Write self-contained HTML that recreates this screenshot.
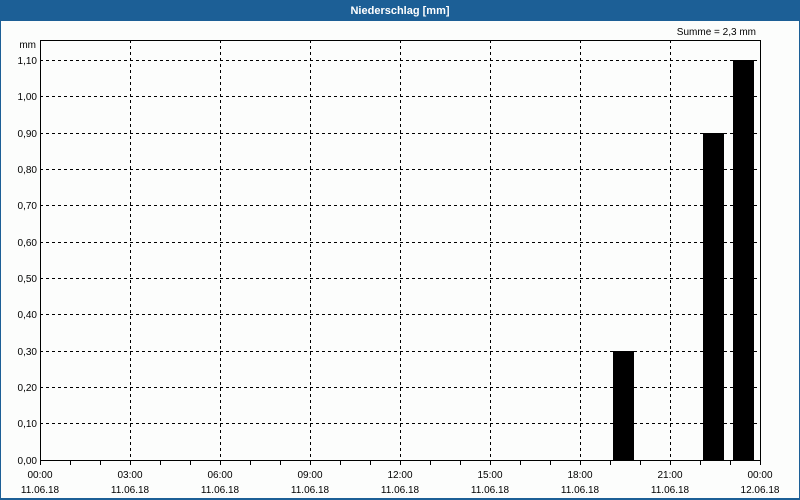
<!DOCTYPE html>
<html><head><meta charset="utf-8"><style>
html,body{margin:0;padding:0;background:#fcfdfc;}
svg{display:block;font-family:"Liberation Sans","DejaVu Sans",sans-serif;}
</style></head><body>
<svg width="800" height="500" viewBox="0 0 800 500" xmlns="http://www.w3.org/2000/svg">
<rect width="800" height="500" fill="#fcfdfc"/>
<rect x="0" y="0" width="800" height="21" fill="#1c5f96"/>
<rect x="0" y="0" width="1" height="500" fill="#1c5f96"/>
<rect x="799" y="0" width="1" height="500" fill="#1c5f96"/>
<rect x="0" y="498" width="800" height="2" fill="#1c5f96"/>
<text x="400" y="14" fill="#fff" font-size="11" font-weight="bold" text-anchor="middle">Niederschlag [mm]</text>
<text x="756" y="35" font-size="10" text-anchor="end" fill="#000">Summe = 2,3 mm</text>
<text x="36" y="48" font-size="10" text-anchor="end" fill="#000">mm</text>
<g stroke="#000" stroke-width="1" stroke-dasharray="3,3" fill="none">
<path d="M40 60.5H760M40 96.5H760M40 133.5H760M40 169.5H760M40 205.5H760M40 242.5H760M40 278.5H760M40 314.5H760M40 351.5H760M40 387.5H760M40 423.5H760"/>
<path d="M130.5 40V460M220.5 40V460M310.5 40V460M400.5 40V460M490.5 40V460M580.5 40V460M670.5 40V460"/>
</g>
<g fill="#000">
<rect x="613" y="351" width="21" height="109"/>
<rect x="703" y="133" width="21" height="327"/>
<rect x="733" y="60" width="21" height="400"/>
</g>
<rect x="40.5" y="40.5" width="720" height="420" fill="none" stroke="#000" stroke-width="1"/>
<g stroke="#000" stroke-width="1">
<path d="M40.5 460V465M70.5 460V465M100.5 460V465M130.5 460V465M160.5 460V465M190.5 460V465M220.5 460V465M250.5 460V465M280.5 460V465M310.5 460V465M340.5 460V465M370.5 460V465M400.5 460V465M430.5 460V465M460.5 460V465M490.5 460V465M520.5 460V465M550.5 460V465M580.5 460V465M610.5 460V465M640.5 460V465M670.5 460V465M700.5 460V465M730.5 460V465M760.5 460V465"/>
</g>
<g font-size="10" text-anchor="end" fill="#000">
<text x="37" y="64">1,10</text><text x="37" y="100">1,00</text><text x="37" y="137">0,90</text>
<text x="37" y="173">0,80</text><text x="37" y="209">0,70</text><text x="37" y="246">0,60</text>
<text x="37" y="282">0,50</text><text x="37" y="318">0,40</text><text x="37" y="355">0,30</text>
<text x="37" y="391">0,20</text><text x="37" y="427">0,10</text><text x="37" y="464">0,00</text>
</g>
<g font-size="10" text-anchor="middle" fill="#000">
<text x="40" y="478">00:00</text><text x="40" y="493">11.06.18</text>
<text x="130" y="478">03:00</text><text x="130" y="493">11.06.18</text>
<text x="220" y="478">06:00</text><text x="220" y="493">11.06.18</text>
<text x="310" y="478">09:00</text><text x="310" y="493">11.06.18</text>
<text x="400" y="478">12:00</text><text x="400" y="493">11.06.18</text>
<text x="490" y="478">15:00</text><text x="490" y="493">11.06.18</text>
<text x="580" y="478">18:00</text><text x="580" y="493">11.06.18</text>
<text x="670" y="478">21:00</text><text x="670" y="493">11.06.18</text>
<text x="760" y="478">00:00</text><text x="760" y="493">12.06.18</text>
</g>
</svg>
</body></html>
